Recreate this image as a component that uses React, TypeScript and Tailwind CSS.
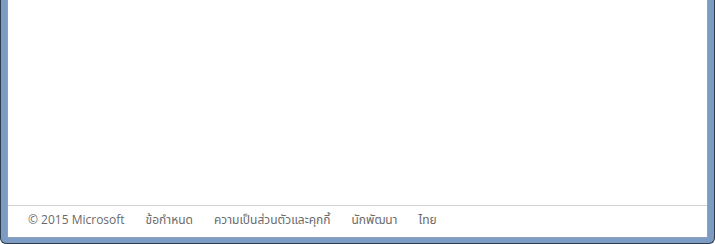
export default function App() {
  const links = ["ข้อกำหนด", "ความเป็นส่วนตัวและคุกกี้", "นักพัฒนา", "ไทย"];
  return (
    <div className="w-[715px] h-[244px] bg-white">
      <div className="h-full border-x border-b border-[#2f3d4f] rounded-b-[6px] bg-[#7d9cc3] px-[6px] pb-[5px] flex flex-col">
        <div className="flex-1 flex flex-col bg-white border-x border-b border-[#8ea2bb]">
          <div className="flex-1" />
          <div className="border-t border-[#d4d4d4] h-[32px] flex items-center pl-[20px] pb-[4px] gap-[21px] text-[12px] text-[#6a6a6a]" style={{ fontFamily: '"Open Sans", "Noto Sans Thai", "Noto Sans", sans-serif' }}>
            <span>© 2015 Microsoft</span>
            {links.map((l) => (
              <span key={l}>{l}</span>
            ))}
          </div>
        </div>
      </div>
    </div>
  );
}
